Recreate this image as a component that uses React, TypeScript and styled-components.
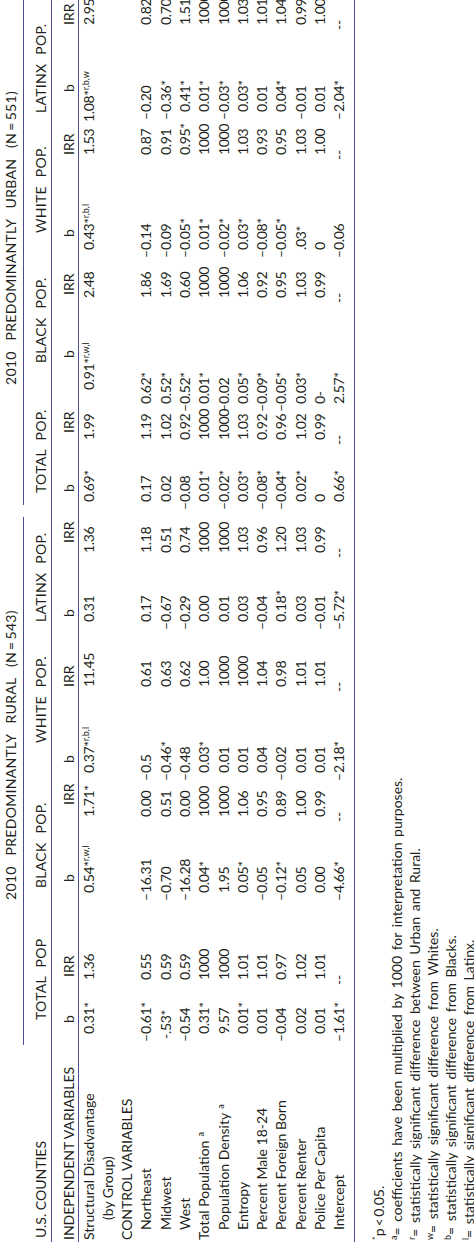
import React from 'react';
import styled, { createGlobalStyle } from 'styled-components';

const INK = '#231f20';
const RULE = '#4a4d92';
const ROW = 19.3;

const GlobalStyle = createGlobalStyle`
  html, body {
    margin: 0;
    padding: 0;
    background: #ffffff;
  }
  body {
    font-family: Lato, 'Open Sans', sans-serif;
    color: ${INK};
  }
`;

// left edge of the digits in each numeric column, where its b / IRR label starts,
// and how far the first (group) value sits from the digits below it
type Col = { x: number; head: number; lead?: number };

const COLS: Col[] = [
  { x: 208, head: 11 },
  { x: 262, head: 3 },
  { x: 349, head: 11 },
  { x: 425, head: 12 },
  { x: 469, head: 10 },
  { x: 555, head: 0 },
  { x: 620, head: 5 },
  { x: 689, head: 10 },
  { x: 740, head: 10 },
  { x: 802, head: 7 },
  { x: 838, head: 46, lead: 14 },
  { x: 944, head: 3 },
  { x: 992, head: 13 },
  { x: 1087, head: 0 },
  { x: 1130, head: 20, lead: -10 },
  { x: 1217, head: 0 },
];
const END = 1280;

const tracks = [COLS[0].x, ...COLS.map((c, i) => (i + 1 < COLS.length ? COLS[i + 1].x : END) - c.x)]
  .map((w) => `${w}px`)
  .join(' ');

const GROUPS = [
  { title: '2010 PREDOMINANTLY RURAL (N\u2009=\u2009543)', pad: 134, ml: -11, mr: 15 },
  { title: '2010 PREDOMINANTLY URBAN (N\u2009=\u2009551)', pad: 117, ml: -3, mr: 0 },
];

const SUBS = [
  { title: 'TOTAL POP', pad: 14 },
  { title: 'BLACK POP.', pad: 5 },
  { title: 'WHITE POP.', pad: 30 },
  { title: 'LATINX POP.', pad: 0 },
  { title: 'TOTAL POP.', pad: 9 },
  { title: 'BLACK POP.', pad: 41 },
  { title: 'WHITE POP.', pad: 17 },
  { title: 'LATINX POP.', pad: -1 },
];

type Line = { label: string; indent: number; note?: string; vals?: string[] };

const LINES: Line[] = [
  {
    label: 'Structural Disadvantage',
    indent: 2,
    vals: ['0.31*', '1.36', '0.54*^r,w,l', '1.71*', '0.37*^r,b,l', '11.45', '0.31', '1.36', '0.69*', '1.99', '0.91*^r,w,l', '2.48', '0.43*^r,b,l', '1.53', '1.08*^r,b,w', '2.95'],
  },
  { label: '(by Group)', indent: 22 },
  { label: 'CONTROL VARIABLES', indent: 2 },
  {
    label: 'Northeast',
    indent: 12,
    vals: ['−0.61*', '0.55', '−16.31', '0.00', '−0.5', '0.61', '0.17', '1.18', '0.17', '1.19', '0.62*', '1.86', '−0.14', '0.87', '−0.20', '0.82'],
  },
  {
    label: 'Midwest',
    indent: 12,
    vals: ['-.53*', '0.59', '−0.70', '0.51', '−0.46*', '0.63', '−0.67', '0.51', '0.02', '1.02', '0.52*', '1.69', '−0.09', '0.91', '−0.36*', '0.70'],
  },
  {
    label: 'West',
    indent: 12,
    vals: ['−0.54', '0.59', '−16.28', '0.00', '−0.48', '0.62', '−0.29', '0.74', '−0.08', '0.92', '−0.52*', '0.60', '−0.05*', '0.95*', '0.41*', '1.51'],
  },
  {
    label: 'Total Population',
    note: 'a',
    indent: 2,
    vals: ['0.31*', '1000', '0.04*', '1000', '0.03*', '1.00', '0.00', '1000', '0.01*', '1000', '0.01*', '1000', '0.01*', '1000', '0.01*', '1000'],
  },
  {
    label: 'Population Density',
    note: 'a',
    indent: 12,
    vals: ['9.57', '1000', '1.95', '1000', '0.01', '1000', '0.01', '1000', '−0.02*', '1000', '−0.02', '1000', '−0.02*', '1000', '−0.03*', '1000'],
  },
  {
    label: 'Entropy',
    indent: 12,
    vals: ['0.01*', '1.01', '0.05*', '1.06', '0.01', '1000', '0.03', '1.03', '0.03*', '1.03', '0.05*', '1.06', '0.03*', '1.03', '0.03*', '1.03'],
  },
  {
    label: 'Percent Male 18-24',
    indent: 12,
    vals: ['0.01', '1.01', '−0.05', '0.95', '0.04', '1.04', '−0.04', '0.96', '−0.08*', '0.92', '−0.09*', '0.92', '−0.08*', '0.93', '0.01', '1.01'],
  },
  {
    label: 'Percent Foreign Born',
    indent: 12,
    vals: ['−0.04', '0.97', '−0.12*', '0.89', '−0.02', '0.98', '0.18*', '1.20', '−0.04*', '0.96', '−0.05*', '0.95', '−0.05*', '0.95', '0.04*', '1.04'],
  },
  {
    label: 'Percent Renter',
    indent: 12,
    vals: ['0.02', '1.02', '0.05', '1.00', '0.01', '1.01', '0.03', '1.03', '0.02*', '1.02', '0.03*', '1.03', '.03*', '1.03', '−0.01', '0.99'],
  },
  {
    label: 'Police Per Capita',
    indent: 12,
    vals: ['0.01', '1.01', '0.00', '0.99', '0.01', '1.01', '−0.01', '0.99', '0', '0.99', '0-', '0.99', '0', '1.00', '0.01', '1.00'],
  },
  {
    label: 'Intercept',
    indent: 12,
    vals: ['−1.61*', '--', '−4.66*', '--', '−2.18*', '--', '−5.72*', '--', '0.66*', '--', '2.57*', '--', '−0.06', '--', '−2.04*', '--'],
  },
];

const NOTES = [
  { mark: '*', text: 'p\u2009<\u20090.05.' },
  { mark: 'a', text: '= coefficients have been multiplied by 1000 for interpretation purposes.' },
  { mark: 'r', text: '= statistically significant difference between Urban and Rural.' },
  { mark: 'w', text: '= statistically significant difference from Whites.' },
  { mark: 'b', text: '= statistically significant difference from Blacks.' },
  { mark: 'l', text: '= statistically significant difference from Latinx.' },
];

function Num({ v }: { v: string }) {
  const [main, sup] = v.split('^');
  const neg = /^[−-]/.test(main);
  const digits = neg ? main.slice(1) : main;
  return (
    <>
      {neg && <Minus $short={main[0] === '-'}>{main[0] === '-' ? '-' : '–'}</Minus>}
      {digits}
      {sup && <Sup>{sup}</Sup>}
    </>
  );
}

export default function App() {
  return (
    <>
      <GlobalStyle />
      <Page>
        <Sheet>
          <GroupRow>
            <span />
            {GROUPS.map((g, i) => (
              <GroupTitle key={g.title} $start={2 + i * 8} $pad={g.pad} $ml={g.ml} $mr={g.mr}>
                {g.title}
              </GroupTitle>
            ))}
          </GroupRow>

          <SubRow>
            <Cell $shift={4}>U.S. COUNTIES</Cell>
            {SUBS.map((s, i) => (
              <SubTitle key={i} $start={2 + i * 2} $shift={s.pad}>
                {s.title}
              </SubTitle>
            ))}
          </SubRow>

          <HeadRow>
            <Cell $shift={2}>INDEPENDENT VARIABLES</Cell>
            {COLS.map((c, i) => (
              <Cell key={i} $shift={c.head}>
                {i % 2 === 0 ? 'b' : 'IRR'}
              </Cell>
            ))}
          </HeadRow>

          <Body>
            {LINES.map((line, r) => (
              <DataRow key={line.label}>
                <Cell $shift={line.indent}>
                  {line.label}
                  {line.note && <Sup $gap>{line.note}</Sup>}
                </Cell>
                {line.vals?.map((v, i) => (
                  <Value key={i} $shift={r === 0 ? COLS[i].lead ?? 0 : 0}>
                    <Num v={v} />
                  </Value>
                ))}
              </DataRow>
            ))}
          </Body>

          <Notes>
            {NOTES.map((n) => (
              <Note key={n.mark}>
                <Sup>{n.mark}</Sup>
                {n.text}
              </Note>
            ))}
          </Notes>
        </Sheet>
      </Page>
    </>
  );
}

const Page = styled.div`
  width: 474px;
  height: 1242px;
  overflow: hidden;
  background: #ffffff;
`;

// the table is set sideways: built left-to-right, then turned a quarter anticlockwise
const Sheet = styled.div`
  width: 1242px;
  height: 474px;
  overflow: hidden;
  display: flex;
  flex-direction: column;
  font-size: 14px;
  transform-origin: 0 0;
  transform: translateY(1242px) rotate(-90deg);
`;

const Grid = styled.div`
  display: grid;
  grid-template-columns: ${tracks};
  white-space: nowrap;
  flex: none;
`;

const GroupRow = styled(Grid)`
  height: 23.5px;
`;

const GroupTitle = styled.div<{ $start: number; $pad: number; $ml: number; $mr: number }>`
  grid-column: ${({ $start }) => `${$start} / span 8`};
  margin-left: ${({ $ml }) => $ml}px;
  margin-right: ${({ $mr }) => $mr}px;
  padding-left: ${({ $pad, $ml }) => $pad - $ml}px;
  line-height: 22px;
  border-bottom: 1.5px solid ${RULE};
  word-spacing: 7px;
  letter-spacing: 0.3px;
`;

const SubRow = styled(Grid)`
  height: 28px;
  box-sizing: border-box;
  border-bottom: 1.5px solid ${RULE};
  align-items: end;
  line-height: 20px;
`;

const SubTitle = styled.div<{ $start: number; $shift: number }>`
  grid-column: ${({ $start }) => `${$start} / span 2`};
  margin-left: ${({ $shift }) => $shift}px;
  word-spacing: 5px;
  letter-spacing: 0.3px;
`;

const HeadRow = styled(Grid)`
  height: 27px;
  box-sizing: border-box;
  border-bottom: 1.5px solid ${RULE};
  align-items: end;
  line-height: 18px;
`;

const Cell = styled.div<{ $shift: number }>`
  margin-left: ${({ $shift }) => $shift}px;
`;

const Value = styled(Cell)`
  letter-spacing: -0.35px;
`;

const Body = styled.div`
  flex: none;
  padding-bottom: 5px;
  border-bottom: 1.5px solid ${RULE};
`;

const DataRow = styled(Grid)`
  height: ${ROW}px;
  line-height: ${ROW}px;
`;

const Minus = styled.span<{ $short: boolean }>`
  display: inline-block;
  width: ${({ $short }) => ($short ? 5 : 8)}px;
  margin-left: ${({ $short }) => ($short ? -5 : -8)}px;
`;

const Sup = styled.span<{ $gap?: boolean }>`
  font-size: 9px;
  line-height: 0;
  vertical-align: 5px;
  letter-spacing: 0;
  margin-left: ${({ $gap }) => ($gap ? 4 : 0)}px;
`;

const Notes = styled.div`
  padding-top: 15px;
  padding-left: 2px;
`;

const Note = styled.div`
  line-height: 18px;
  word-spacing: 2px;
  white-space: nowrap;
`;
